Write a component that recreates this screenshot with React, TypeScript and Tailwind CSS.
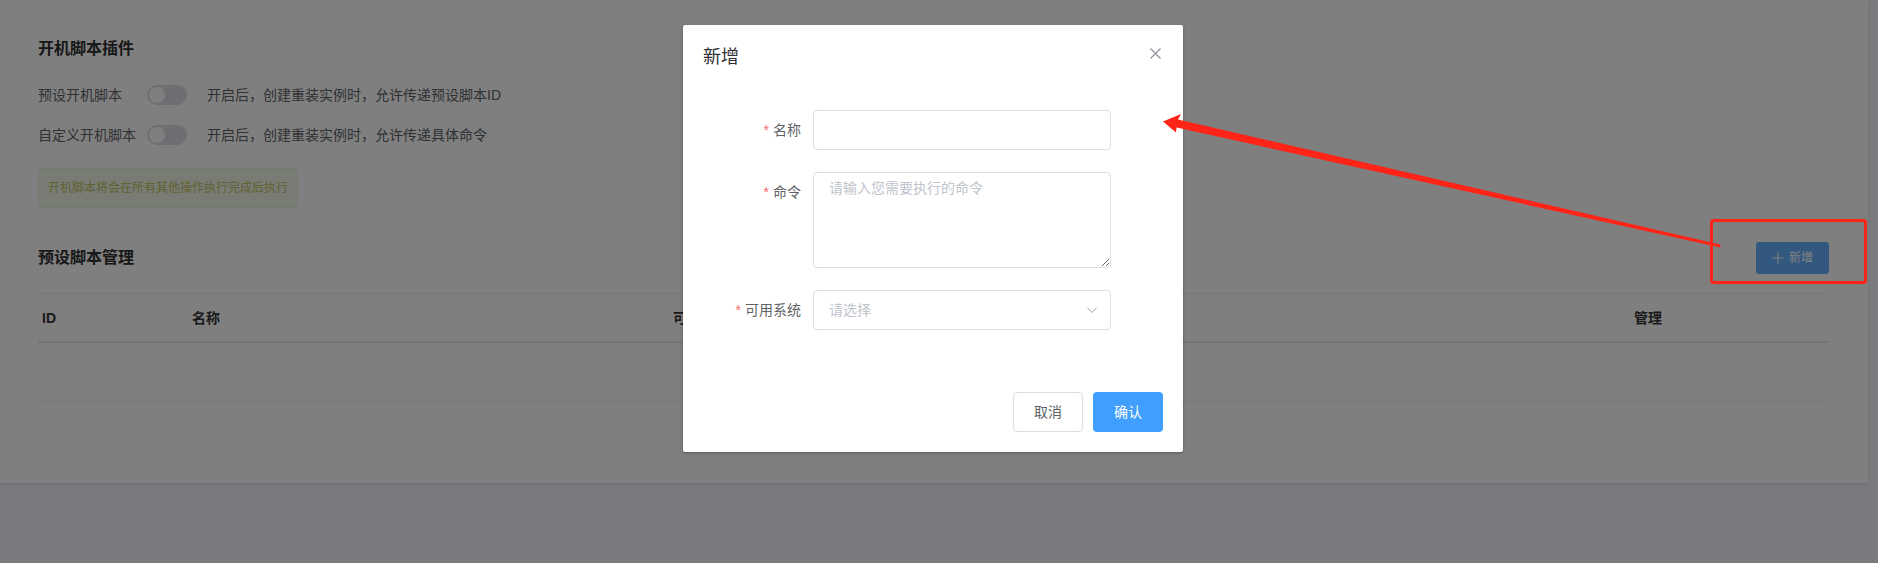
import React from "react";

const FONT = "font-['Liberation_Sans','Noto_Sans_CJK_SC',sans-serif]";

function Switch() {
  return (
    <div className="relative h-5 w-10 rounded-full bg-[#dcdfe6]">
      <div className="absolute left-[2px] top-[2px] h-4 w-4 rounded-full bg-white" />
    </div>
  );
}

function FormRow({ label, children, labelAlign = "center" }: { label: string; children: React.ReactNode; labelAlign?: string }) {
  return (
    <div className="flex">
      <div className={`flex h-10 w-[110px] shrink-0 items-center justify-end pr-3 text-sm text-[#606266] ${labelAlign}`}>
        <span className="mr-1 text-[#f56c6c]">*</span>
        {label}
      </div>
      <div className="w-[298px]">{children}</div>
    </div>
  );
}

export default function App() {
  return (
    <div className={`relative h-[563px] w-[1878px] overflow-hidden bg-[#f6f4fe] ${FONT}`}>
      {/* Page card */}
      <div className="h-[483px] w-[1868px] bg-white px-[38px] pt-[37px] shadow-[0_2px_4px_rgba(0,0,0,0.08)]">
        <h3 className="text-base font-bold leading-6 text-[#303133]">开机脚本插件</h3>

        <div className="mt-[24px] flex flex-col gap-5 text-sm text-[#606266]">
          <div className="flex h-5 items-center">
            <span className="w-[109px] shrink-0">预设开机脚本</span>
            <Switch />
            <span className="ml-5">开启后，创建重装实例时，允许传递预设脚本ID</span>
          </div>
          <div className="flex h-5 items-center">
            <span className="w-[109px] shrink-0 whitespace-nowrap">自定义开机脚本</span>
            <Switch />
            <span className="ml-5">开启后，创建重装实例时，允许传递具体命令</span>
          </div>
        </div>

        <div className="mt-[23px] flex h-10 w-[260px] items-center rounded border border-[#e1f3d8] bg-[#f0f9eb] px-[9px] text-xs text-[#c4c260]">
          开机脚本将会在所有其他操作执行完成后执行
        </div>

        <div className="mt-[34px] flex h-8 items-center justify-between pr-[1px]">
          <h3 className="text-base font-bold leading-6 text-[#303133]">预设脚本管理</h3>
          <button className="flex h-8 w-[73px] items-center justify-center gap-[5px] rounded-[3px] bg-[#66b1ff] text-xs text-white">
            <svg width="12" height="12" viewBox="0 0 12 12" fill="none" stroke="currentColor" strokeWidth="1.1">
              <path d="M6 0.5V11.5M0.5 6H11.5" />
            </svg>
            新增
          </button>
        </div>

        <div className="mt-[19px] w-[1791px] border-t border-[#ebeef5] text-sm">
          <div className="grid h-[49px] grid-cols-[150px_481px_961px_199px] items-center border-b-2 border-[#e6e8ee] font-bold text-[#333]">
            <div className="pl-1">ID</div>
            <div className="pl-1">名称</div>
            <div className="pl-1">可用系统</div>
            <div className="pl-1">管理</div>
          </div>
          <div className="h-[59px] border-b border-[#ebeef5]" />
        </div>
      </div>

      {/* Modal overlay */}
      <div className="absolute inset-0 bg-black/50" />

      {/* Dialog */}
      <div className="absolute left-[683px] top-[25px] w-[500px] rounded-[2px] bg-white shadow-[0_1px_3px_rgba(0,0,0,0.3)]">
        <div className="relative px-5 pb-[10px] pt-5">
          <span className="text-lg leading-6 text-[#303133]">新增</span>
          <button className="absolute right-5 top-5 flex h-4 w-4 items-center justify-center text-[#909399]">
            <svg width="11" height="11" viewBox="0 0 11 11" fill="none" stroke="currentColor" strokeWidth="1.2">
              <path d="M0.5 0.5L10.5 10.5M10.5 0.5L0.5 10.5" />
            </svg>
          </button>
        </div>
        <div className="flex flex-col gap-[22px] px-5 pb-[52px] pt-[30px]">
          <FormRow label="名称">
            <input className="h-10 w-full rounded border border-[#dcdfe6] px-[15px] text-sm outline-none" />
          </FormRow>
          <FormRow label="命令" labelAlign="self-start">
            <textarea
              className="block h-[96px] w-full rounded border border-[#dcdfe6] px-[15px] py-[5px] text-sm leading-[1.5] outline-none placeholder:text-[#c0c4cc]"
              placeholder="请输入您需要执行的命令"
            />
          </FormRow>
          <FormRow label="可用系统">
            <div className="flex h-10 w-full items-center justify-between rounded border border-[#dcdfe6] pl-[15px] pr-[11px] text-sm text-[#c0c4cc]">
              <span>请选择</span>
              <svg width="14" height="14" viewBox="0 0 14 14" fill="none" stroke="currentColor" strokeWidth="1.1">
                <path d="M2.5 5L7 9.5L11.5 5" />
              </svg>
            </div>
          </FormRow>
        </div>
        <div className="flex justify-end gap-[10px] px-5 pb-5 pt-[10px]">
          <button className="h-10 w-[70px] rounded border border-[#dcdfe6] bg-white text-sm text-[#606266]">取消</button>
          <button className="h-10 w-[70px] rounded bg-[#409eff] text-sm text-white">确认</button>
        </div>
      </div>

      {/* Red annotation */}
      <svg className="pointer-events-none absolute inset-0" width="1878" height="563" viewBox="0 0 1878 563">
        <polygon
          points="1163,121.5 1181,114 1178,119.5 1720,244.5 1720.5,247.5 1176.5,127.5 1176,132.5"
          fill="#ff2418"
        />
        <rect x="1711.5" y="220.5" width="154" height="62" rx="2" fill="none" stroke="#ff2418" strokeWidth="3" />
      </svg>
    </div>
  );
}
